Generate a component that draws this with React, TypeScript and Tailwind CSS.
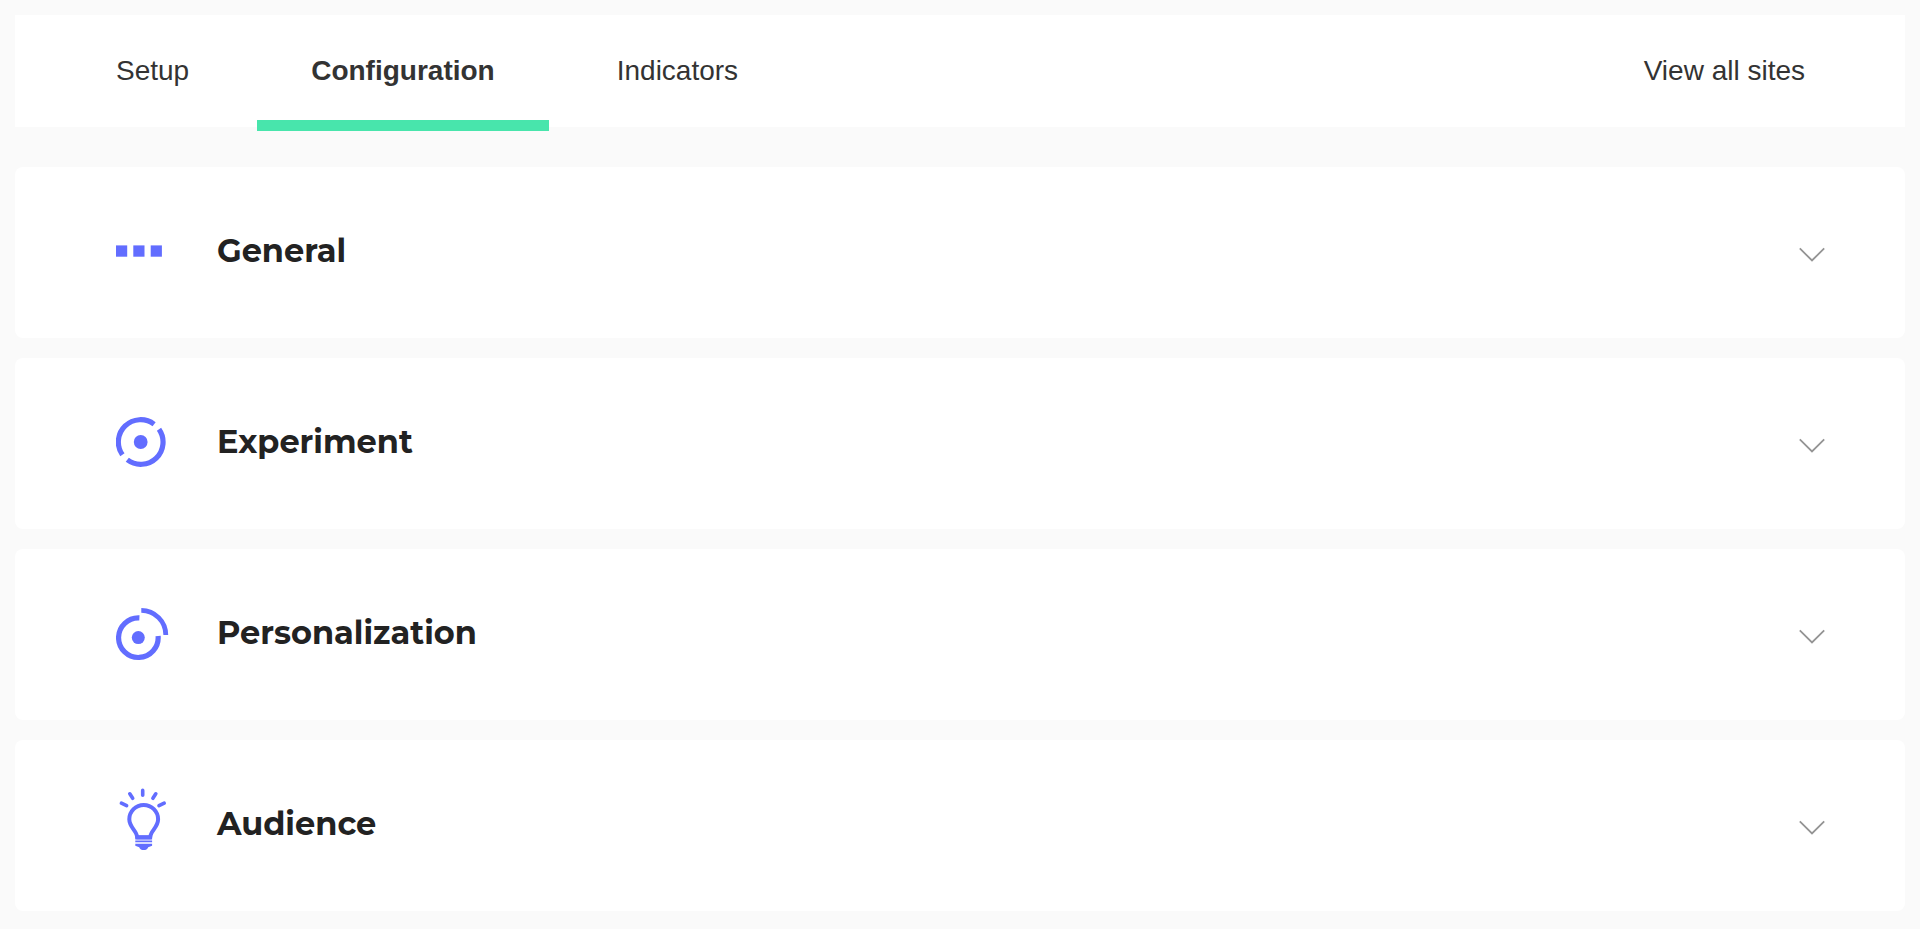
import { useState } from "react";
import type { ReactNode } from "react";

const tabs = ["Setup", "Configuration", "Indicators"];

function GeneralIcon() {
  return (
    <svg viewBox="0 0 64 81" className="h-[81px] w-16 shrink-0 fill-[#626dff]" aria-hidden="true">
      <rect x="0" y="33.4" width="11.2" height="11.3" />
      <rect x="17.3" y="33.4" width="11.2" height="11.3" />
      <rect x="34.7" y="33.4" width="11.2" height="11.3" />
    </svg>
  );
}

function ExperimentIcon() {
  return (
    <svg viewBox="0 0 64 81" className="h-[81px] w-16 shrink-0" fill="none" stroke="#626dff" aria-hidden="true">
      <path d="M43 26.2A22.3 22.3 0 0 1 11.3 56.8M6.4 51.8A22.3 22.3 0 0 1 38.1 21.2" strokeWidth="5.2" />
      <circle cx="24.7" cy="39" r="6.9" fill="#626dff" stroke="none" />
    </svg>
  );
}

function PersonalizationIcon() {
  return (
    <svg viewBox="0 0 64 81" className="h-[81px] w-16 shrink-0" fill="none" stroke="#626dff" aria-hidden="true">
      <path d="M23.4 23.9A19.8 19.8 0 1 0 42.1 42" strokeWidth="5.2" />
      <path d="M25.3 16.4A24.6 24.6 0 0 1 49.8 41" strokeWidth="4.8" />
      <circle cx="22.3" cy="43.6" r="6.5" fill="#626dff" stroke="none" />
    </svg>
  );
}

function AudienceIcon() {
  return (
    <svg viewBox="0 0 64 81" className="h-[81px] w-16 shrink-0" fill="none" stroke="#626dff" aria-hidden="true">
      <path
        d="M26.7 5.4V10.2M13.8 8.8L16.7 13.3M39.8 8.8L36.9 13.3M5.4 18.2L10.6 20.7M48.2 18.2L43 20.7"
        strokeWidth="3.6"
        strokeLinecap="round"
      />
      <path
        d="M21.2 52.3C20.8 45.5 13.3 42.5 13.3 34.3A14.4 14.4 0 0 1 42.1 34.3C42.1 42.5 34.6 45.5 34.2 52.3Z"
        strokeWidth="4"
        strokeLinejoin="round"
      />
      <path
        d="M19.3 50.4H36.1V54.6H19.3ZM19.3 55.4H36.1V57.2H19.3ZM19.3 58.8H36.1V60.8L32.2 62.2C31 66 24.4 66 23.2 62.2L19.3 60.8Z"
        fill="#626dff"
        stroke="none"
      />
    </svg>
  );
}

function Chevron({ open }: { open: boolean }) {
  return (
    <svg
      viewBox="0 0 26 20"
      className={open ? "h-5 w-[26px] shrink-0 rotate-180" : "h-5 w-[26px] shrink-0"}
      fill="none"
      stroke="#949494"
      strokeWidth="1.8"
      aria-hidden="true"
    >
      <path d="M0.8 5.4L13 17.5L25.2 5.4" />
    </svg>
  );
}

const sections: { title: string; icon: ReactNode }[] = [
  { title: "General", icon: <GeneralIcon /> },
  { title: "Experiment", icon: <ExperimentIcon /> },
  { title: "Personalization", icon: <PersonalizationIcon /> },
  { title: "Audience", icon: <AudienceIcon /> },
];

export default function App() {
  const [openSection, setOpenSection] = useState<string | null>(null);

  return (
    <div className="min-h-screen bg-[#fafafa] p-[15px]">
      <header className="flex h-28 items-stretch justify-between bg-white pr-[100px] pl-[47px] font-['Liberation_Sans',Arial,sans-serif] text-[28px] text-[#333333]">
        <nav className="flex gap-[14px]">
          {tabs.map((tab) => {
            const active = tab === "Configuration";
            return (
              <a
                key={tab}
                href="#"
                aria-current={active ? "page" : undefined}
                className={`relative flex items-center px-[54px] ${active ? "font-bold" : ""}`}
              >
                {tab}
                {active && <span className="absolute inset-x-0 -bottom-1 h-[11px] bg-[#48e5ac]" />}
              </a>
            );
          })}
        </nav>
        <a href="#" className="flex items-center">
          View all sites
        </a>
      </header>

      <main className="mt-10 flex flex-col gap-5">
        {sections.map(({ title, icon }) => (
          <section key={title} className="rounded-lg bg-white">
            <h2>
              <button
                type="button"
                aria-expanded={openSection === title}
                onClick={() => setOpenSection(openSection === title ? null : title)}
                className="flex w-full cursor-pointer items-center gap-[37px] py-[45px] pr-20 pl-[101px] text-left"
              >
                {icon}
                <span className="flex-1 pb-1 font-[Montserrat,Inter,sans-serif] text-[32px] leading-10 font-bold text-[#222222]">
                  {title}
                </span>
                <Chevron open={openSection === title} />
              </button>
            </h2>
          </section>
        ))}
      </main>
    </div>
  );
}
